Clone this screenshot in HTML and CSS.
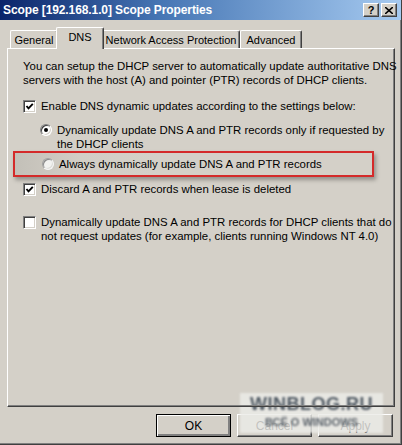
FILE: index.html
```html
<!DOCTYPE html>
<html lang="en">
<head>
    <meta charset="UTF-8">
    <title>Scope Properties</title>
    <link rel="stylesheet" href="styles.css">
</head>
<body>
    <div class="window">
        <div class="titlebar">
            <div class="title">Scope [192.168.1.0] Scope Properties</div>
            <div class="caption-buttons">
                <span class="caption-btn help">?</span>
                <span class="caption-btn close">
                    <svg width="8" height="7" viewBox="0 0 8 7"><path d="M0 0 L8 7 M8 0 L0 7" stroke="#000" stroke-width="1.6"/></svg>
                </span>
            </div>
        </div>

        <div class="tabs">
            <div class="tab tab-general">General</div>
            <div class="tab tab-dns selected">DNS</div>
            <div class="tab tab-nap">Network Access Protection</div>
            <div class="tab tab-advanced">Advanced</div>
        </div>

        <div class="panel">
            <p class="intro">You can setup the DHCP server to automatically update authoritative DNS<br>servers with the host (A) and pointer (PTR) records of DHCP clients.</p>

            <div class="option opt-enable">
                <span class="checkbox checked">
                    <svg width="9" height="9" viewBox="0 0 9 9"><path d="M1.5 4 L3.5 6.3 L7.8 1.8" fill="none" stroke="#000" stroke-width="1.9"/></svg>
                </span>
                <span class="label">Enable DNS dynamic updates according to the settings below:</span>
            </div>

            <div class="option sub opt-requested">
                <span class="radio checked"><span class="dot"></span></span>
                <span class="label">Dynamically update DNS A and PTR records only if requested by<br>the DHCP clients</span>
            </div>

            <div class="highlight">
                <div class="option sub">
                    <span class="radio faded"></span>
                    <span class="label">Always dynamically update DNS A and PTR records</span>
                </div>
            </div>

            <div class="option opt-discard">
                <span class="checkbox checked">
                    <svg width="9" height="9" viewBox="0 0 9 9"><path d="M1.5 4 L3.5 6.3 L7.8 1.8" fill="none" stroke="#000" stroke-width="1.9"/></svg>
                </span>
                <span class="label">Discard A and PTR records when lease is deleted</span>
            </div>

            <div class="option opt-legacy">
                <span class="checkbox"></span>
                <span class="label">Dynamically update DNS A and PTR records for DHCP clients that do<br>not request updates (for example, clients running Windows NT 4.0)</span>
            </div>
        </div>

        <div class="buttons">
            <button class="btn default">OK</button>
            <button class="btn">Cancel</button>
            <button class="btn">Apply</button>
        </div>

        <div class="watermark">
            <div class="wm-main">WINBLOG.RU</div>
            <div class="wm-sub">ВСЁ О WINDOWS</div>
        </div>
    </div>
</body>
</html>
```

FILE: styles.css
```css
* {
    margin: 0;
    padding: 0;
    box-sizing: border-box;
}

body {
    font-family: 'Liberation Sans', Arial, sans-serif;
    font-size: 11.4px;
    color: #000;
    background: #d4d0c8;
}

.window {
    position: relative;
    width: 402px;
    height: 445px;
    background: #d4d0c8;
    border-right: 1px solid #404040;
    border-bottom: 1px solid #404040;
    box-shadow: inset -1px -1px 0 #808080;
    overflow: hidden;
}

/* title bar */
.titlebar {
    height: 20px;
    display: flex;
    align-items: center;
    justify-content: space-between;
    padding: 0 4px 0 3px;
    background: linear-gradient(90deg, #0a246a 0%, #4676b4 40%, #a6caf0 100%);
}

.title {
    color: #fff;
    font-weight: bold;
    font-size: 12px;
    letter-spacing: -0.1px;
}

.caption-buttons {
    display: flex;
    gap: 2px;
}

.caption-btn {
    width: 16px;
    height: 14px;
    display: flex;
    align-items: center;
    justify-content: center;
    background: #d4d0c8;
    border-top: 1px solid #fff;
    border-left: 1px solid #fff;
    border-right: 1px solid #404040;
    border-bottom: 1px solid #404040;
    box-shadow: inset -1px -1px 0 #808080;
    font-weight: bold;
    font-size: 11px;
    line-height: 1;
}

/* tabs */
.tabs {
    display: flex;
    align-items: flex-end;
    height: 28px;
    padding-left: 10px;
    position: relative;
    z-index: 2;
}

.tab {
    height: 18px;
    display: flex;
    align-items: center;
    justify-content: center;
    white-space: nowrap;
    font-size: 11px;
    border-top: 1px solid #fff;
    border-left: 1px solid #fff;
    border-right: 1px solid #404040;
    box-shadow: inset -1px 0 0 #808080;
    border-radius: 2px 2px 0 0;
    color: #000;
    padding-top: 1px;
}

.tab-general { width: 48px; }
.tab-dns { width: 44px; }
.tab-nap { width: 138px; }
.tab-advanced { width: 62px; }

.tab.selected {
    height: 22px;
    width: 48px;
    margin: 0 -2px -1px;
    background: #d4d0c8;
    padding-top: 0;
    padding-bottom: 4px;
    position: relative;
    z-index: 3;
}

/* tab page */
.panel {
    margin-left: 7px;
    width: 388px;
    height: 359px;
    border-top: 1px solid #fff;
    border-left: 1px solid #fff;
    border-right: 1px solid #404040;
    border-bottom: 1px solid #404040;
    box-shadow: inset -1px -1px 0 #808080;
    padding: 10px 0 0 15px;
    position: relative;
    z-index: 1;
}

.intro {
    line-height: 14px;
    white-space: nowrap;
}

.option {
    display: flex;
    align-items: flex-start;
    line-height: 14px;
    white-space: nowrap;
}

.option .label {
    margin-left: 5px;
}

.opt-enable { margin-top: 12px; }
.opt-requested { margin-top: 10px; }
.opt-discard { margin-top: 5px; }
.opt-legacy { margin-top: 19px; }

.option.sub {
    padding-left: 17px;
}

.checkbox {
    width: 13px;
    height: 13px;
    flex: none;
    background: #fff;
    border-top: 1px solid #808080;
    border-left: 1px solid #808080;
    border-right: 1px solid #fff;
    border-bottom: 1px solid #fff;
    box-shadow: inset 1px 1px 0 #404040, inset -1px -1px 0 #d4d0c8;
    display: flex;
    align-items: center;
    justify-content: center;
    margin-top: 1px;
}

.radio {
    width: 12px;
    height: 12px;
    flex: none;
    border-radius: 50%;
    background: #fff;
    border: 1px solid;
    border-color: #808080 #fff #fff #808080;
    box-shadow: inset 1px 1px 0 #404040, inset -1px -1px 0 #d4d0c8;
    display: flex;
    align-items: center;
    justify-content: center;
    margin-top: 1px;
}

.radio .dot {
    width: 4px;
    height: 4px;
    border-radius: 50%;
    background: #000;
}

.radio.faded {
    background: #f2f2f0;
    border-color: #a0a0a0 #f4f4f4 #f4f4f4 #a0a0a0;
    box-shadow: inset 1px 1px 0 #8a8a8a, inset -1px -1px 0 #dcdcd8;
}

.highlight {
    margin: 0 0 0 -10px;
    width: 361px;
    height: 26px;
    border: 2px solid #d42a2a;
    padding: 4px 0 0 10px;
    background: linear-gradient(90deg, #c3c0b8 0%, #d2cec6 18%, #d4d0c8 40%);
    box-shadow: 2px 3px 4px rgba(0, 0, 0, 0.3);
}

/* dialog buttons */
.buttons {
    display: flex;
    justify-content: flex-end;
    gap: 6px;
    padding: 7px 8px 0 0;
}

.btn {
    width: 75px;
    height: 23px;
    font-family: 'Liberation Sans', Arial, sans-serif;
    font-size: 12px;
    background: #d4d0c8;
    border-top: 1px solid #fff;
    border-left: 1px solid #fff;
    border-right: 1px solid #404040;
    border-bottom: 1px solid #404040;
    box-shadow: inset -1px -1px 0 #808080;
}

.btn.default {
    border: 1px solid #000;
    box-shadow: inset 1px 1px 0 #fff, inset -2px -2px 0 #808080;
}

/* site watermark over the corner */
.watermark {
    position: absolute;
    left: 240px;
    top: 393px;
    width: 143px;
    height: 40px;
    background: rgba(236, 235, 232, 0.82);
    text-align: center;
    color: #4e5862;
    font-weight: bold;
    filter: blur(0.8px);
}

.wm-main {
    font-size: 18px;
    line-height: 22px;
    letter-spacing: 0.5px;
}

.wm-sub {
    font-size: 11px;
    line-height: 14px;
    color: #5a626a;
}
```
